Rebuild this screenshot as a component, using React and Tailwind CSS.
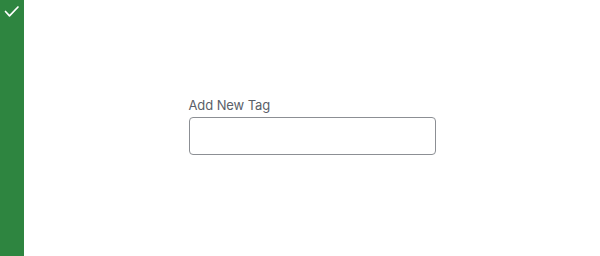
export default function App() {
  return (
    <div className="flex h-[256px] w-[600px] bg-white font-['Inter',sans-serif]">
      <div className="w-[24px] shrink-0 bg-[#2e8540]">
        <svg width="24" height="24" viewBox="0 0 24 24" fill="none">
          <path d="M5.5 11.5 L9.5 15.8 L18 7" stroke="white" strokeWidth="1.7" strokeLinecap="round" strokeLinejoin="round" />
        </svg>
      </div>
      <div className="flex flex-1 items-center justify-center">
        <div className="mb-[4px] flex w-[247px] flex-col">
          <label className="mb-[4px] text-[13px] leading-[16px] tracking-[-0.1px] text-[#5a6068]">Add New Tag</label>
          <input type="text" className="h-[38px] w-full rounded-[4px] border border-[#8c8f94] bg-white px-2 outline-none" />
        </div>
      </div>
    </div>
  );
}
